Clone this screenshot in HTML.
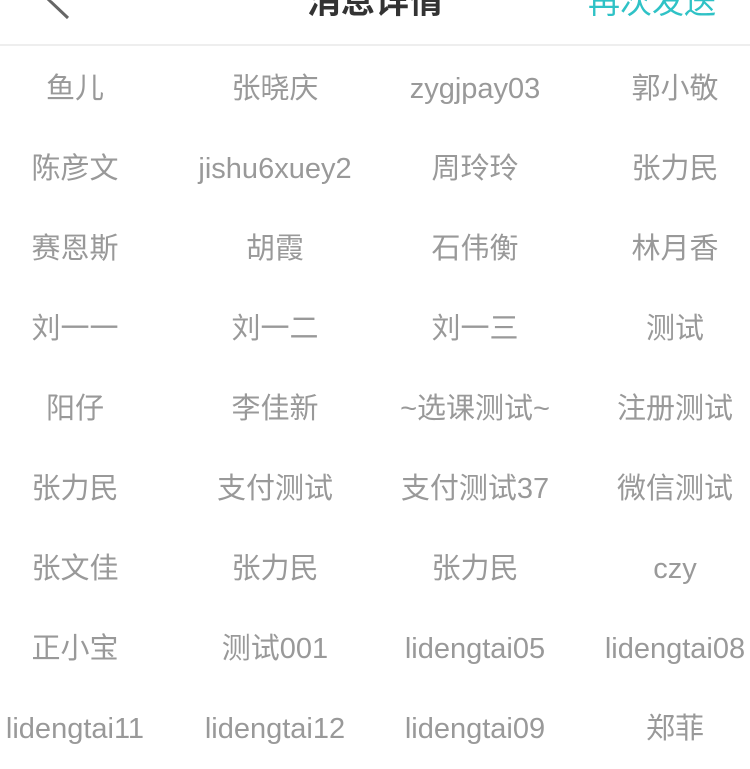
<!DOCTYPE html>
<html><head><meta charset="utf-8"><style>
html,body{margin:0;padding:0;background:#fff;width:750px;height:750px;overflow:hidden;font-family:"Liberation Sans","Noto Sans CJK SC",sans-serif}
.hdr{position:absolute;left:0;top:0;width:750px;height:44px;border-bottom:2px solid #eeeeee}
.t{position:absolute;top:-18px;left:0;width:750px;text-align:center;font-size:34px;font-weight:bold;color:#333;line-height:40px}
.r{position:absolute;top:-18px;right:34px;font-size:32px;color:#2fc2c6;line-height:40px}
.grid{position:absolute;top:49px;left:0;width:750px}
.row{height:80px;position:relative}
.row div{position:absolute;top:0;width:200px;margin-left:-100px;text-align:center;line-height:80px;font-size:29px;color:#999;white-space:nowrap}
.row div:nth-child(1){left:75px}
.row div:nth-child(2){left:275px}
.row div:nth-child(3){left:475px}
.row div:nth-child(4){left:675px}
</style></head><body>
<div class="hdr">
<svg style="position:absolute;left:44px;top:0" width="30" height="22" viewBox="0 0 30 22"><polyline points="22,-14 5,0 24,18" fill="none" stroke="#666" stroke-width="3"/></svg>
<div class="t">消息详情</div>
<div class="r">再次发送</div>
</div>
<div class="grid">
<div class="row"><div>鱼儿</div><div>张晓庆</div><div>zygjpay03</div><div>郭小敬</div></div>
<div class="row"><div>陈彦文</div><div>jishu6xuey2</div><div>周玲玲</div><div>张力民</div></div>
<div class="row"><div>赛恩斯</div><div>胡霞</div><div>石伟衡</div><div>林月香</div></div>
<div class="row"><div>刘一一</div><div>刘一二</div><div>刘一三</div><div>测试</div></div>
<div class="row"><div>阳仔</div><div>李佳新</div><div>~选课测试~</div><div>注册测试</div></div>
<div class="row"><div>张力民</div><div>支付测试</div><div>支付测试37</div><div>微信测试</div></div>
<div class="row"><div>张文佳</div><div>张力民</div><div>张力民</div><div>czy</div></div>
<div class="row"><div>正小宝</div><div>测试001</div><div>lidengtai05</div><div>lidengtai08</div></div>
<div class="row"><div>lidengtai11</div><div>lidengtai12</div><div>lidengtai09</div><div>郑菲</div></div>
</div>
</body></html>
